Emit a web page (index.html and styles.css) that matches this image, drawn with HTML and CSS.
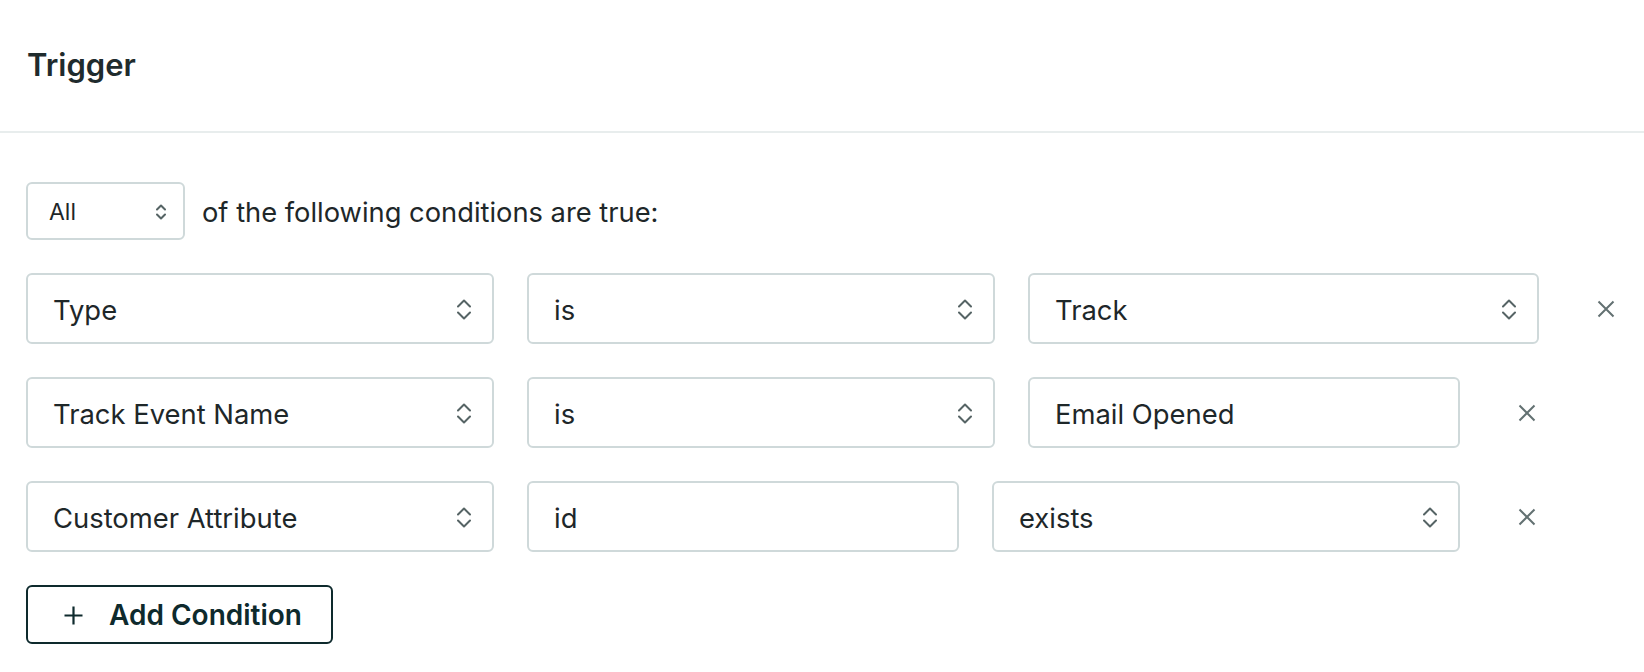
FILE: index.html
```html
<!DOCTYPE html>
<html lang="en">
<head>
<meta charset="utf-8">
<title>Trigger</title>
<link rel="stylesheet" href="styles.css">
</head>
<body>
<header class="header">
  <h1 class="title">Trigger</h1>
</header>
<main class="content">
  <div class="match-row">
    <div class="field field-small">
      <span class="field-text">All</span>
      <svg class="chev chev-small" viewBox="0 0 10 16" aria-hidden="true"><path d="M1 5.5 L5 1.5 L9 5.5 M1 10.5 L5 14.5 L9 10.5"/></svg>
    </div>
    <span class="match-text">of the following conditions are true:</span>
  </div>

  <div class="cond-row">
    <div class="field w-a"><span class="field-text">Type</span><svg class="chev" viewBox="0 0 14 21" aria-hidden="true"><path d="M1 7.5 L7 1.5 L13 7.5 M1 13.5 L7 19.5 L13 13.5"/></svg></div>
    <div class="field w-a"><span class="field-text">is</span><svg class="chev" viewBox="0 0 14 21" aria-hidden="true"><path d="M1 7.5 L7 1.5 L13 7.5 M1 13.5 L7 19.5 L13 13.5"/></svg></div>
    <div class="field w-c"><span class="field-text">Track</span><svg class="chev" viewBox="0 0 14 21" aria-hidden="true"><path d="M1 7.5 L7 1.5 L13 7.5 M1 13.5 L7 19.5 L13 13.5"/></svg></div>
    <button class="remove" type="button" aria-label="Remove"><svg viewBox="0 0 18 18" aria-hidden="true"><path d="M1.5 1.5 L16.5 16.5 M16.5 1.5 L1.5 16.5"/></svg></button>
  </div>

  <div class="cond-row">
    <div class="field w-a"><span class="field-text">Track Event Name</span><svg class="chev" viewBox="0 0 14 21" aria-hidden="true"><path d="M1 7.5 L7 1.5 L13 7.5 M1 13.5 L7 19.5 L13 13.5"/></svg></div>
    <div class="field w-a"><span class="field-text">is</span><svg class="chev" viewBox="0 0 14 21" aria-hidden="true"><path d="M1 7.5 L7 1.5 L13 7.5 M1 13.5 L7 19.5 L13 13.5"/></svg></div>
    <div class="field w-b"><span class="field-text">Email Opened</span></div>
    <button class="remove" type="button" aria-label="Remove"><svg viewBox="0 0 18 18" aria-hidden="true"><path d="M1.5 1.5 L16.5 16.5 M16.5 1.5 L1.5 16.5"/></svg></button>
  </div>

  <div class="cond-row">
    <div class="field w-a"><span class="field-text">Customer Attribute</span><svg class="chev" viewBox="0 0 14 21" aria-hidden="true"><path d="M1 7.5 L7 1.5 L13 7.5 M1 13.5 L7 19.5 L13 13.5"/></svg></div>
    <div class="field w-b"><span class="field-text">id</span></div>
    <div class="field w-a"><span class="field-text">exists</span><svg class="chev" viewBox="0 0 14 21" aria-hidden="true"><path d="M1 7.5 L7 1.5 L13 7.5 M1 13.5 L7 19.5 L13 13.5"/></svg></div>
    <button class="remove" type="button" aria-label="Remove"><svg viewBox="0 0 18 18" aria-hidden="true"><path d="M1.5 1.5 L16.5 16.5 M16.5 1.5 L1.5 16.5"/></svg></button>
  </div>

  <button class="add-btn" type="button">
    <svg class="plus" viewBox="0 0 19 19" aria-hidden="true"><path d="M9.5 0.5 V18.5 M0.5 9.5 H18.5"/></svg>
    <span>Add Condition</span>
  </button>
</main>
</body>
</html>
```

FILE: styles.css
```css
* { box-sizing: border-box; }

html, body {
  margin: 0;
  padding: 0;
  background: #ffffff;
}

body {
  font-family: Inter, "Noto Sans", "Liberation Sans", sans-serif;
  color: #1e2729;
  width: 1644px;
  height: 672px;
  overflow: hidden;
}

.header {
  height: 133px;
  border-bottom: 2px solid #e8eded;
  display: flex;
  align-items: center;
  padding-left: 27px;
  padding-bottom: 2px;
}

.title {
  margin: 0;
  font-size: 31px;
  font-weight: 600;
  color: #1f2b2d;
  letter-spacing: 0;
}

.content {
  padding: 49px 0 0 26px;
  display: flex;
  flex-direction: column;
  gap: 33px;
}

.match-row {
  display: flex;
  align-items: center;
  gap: 17px;
}

.field {
  height: 71px;
  border: 2px solid #cfd9da;
  border-radius: 6px;
  display: flex;
  align-items: center;
  justify-content: space-between;
  padding: 2px 21px 0 25px;
  font-size: 27.4px;
  color: #1e2729;
  background: #fff;
}

.field-small {
  width: 159px;
  height: 58px;
  font-size: 23px;
  padding: 1px 17px 0 21px;
}

.match-text {
  font-size: 27.3px;
  color: #1e2729;
  padding-top: 2px;
}

.w-a { width: 468px; }
.w-b { width: 432px; }
.w-c { width: 511px; }

.cond-row {
  display: flex;
  align-items: center;
  gap: 33px;
}

.chev {
  width: 14px;
  height: 21px;
  flex: none;
}

.chev-small {
  width: 10px;
  height: 16px;
}

.chev path {
  fill: none;
  stroke: #566465;
  stroke-width: 2;
  stroke-linecap: round;
  stroke-linejoin: round;
}

.remove {
  border: 0;
  background: none;
  padding: 0;
  margin-left: 25px;
  width: 18px;
  height: 18px;
  display: flex;
}

.remove svg {
  width: 18px;
  height: 18px;
}

.remove path {
  fill: none;
  stroke: #637172;
  stroke-width: 2;
}

.add-btn {
  align-self: flex-start;
  width: 307px;
  height: 59px;
  border: 2px solid #0e2a2d;
  border-radius: 6px;
  background: #fff;
  display: flex;
  align-items: center;
  gap: 26px;
  padding: 1px 0 0 36px;
  font-family: Inter, "Noto Sans", "Liberation Sans", sans-serif;
  font-size: 28px;
  font-weight: 600;
  color: #0e2a2d;
}

.plus {
  width: 19px;
  height: 19px;
  flex: none;
}

.plus path {
  fill: none;
  stroke: #0e2a2d;
  stroke-width: 2.2;
}
```
